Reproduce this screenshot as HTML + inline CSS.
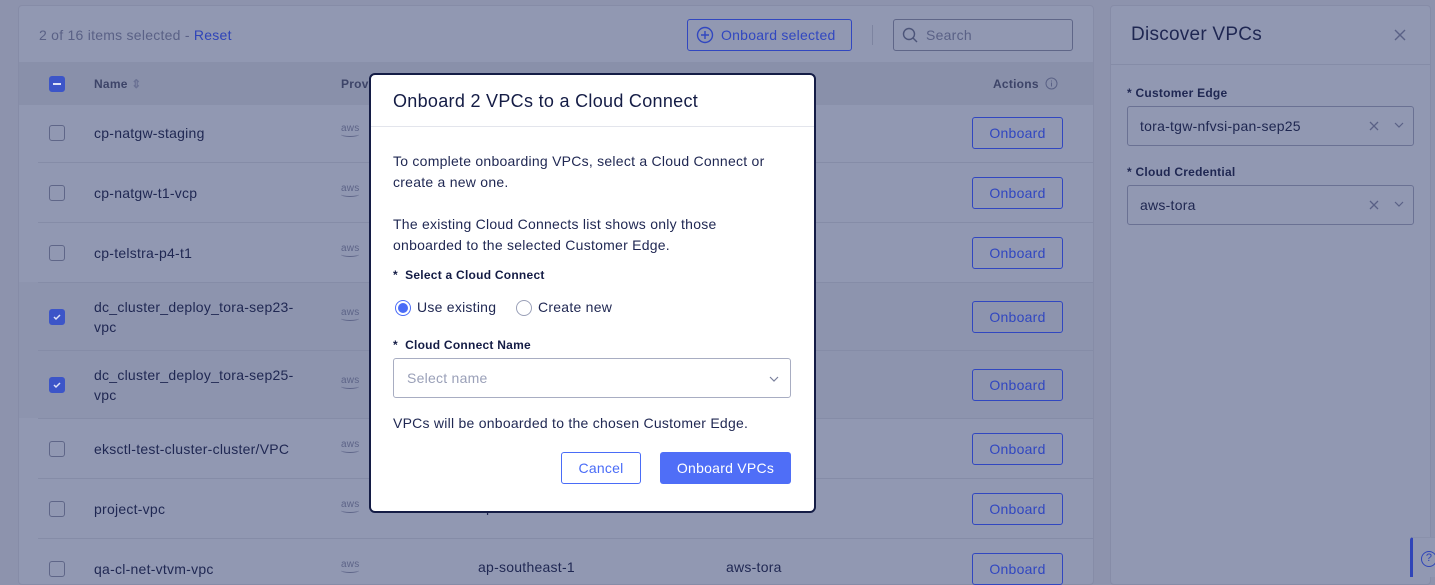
<!DOCTYPE html>
<html><head><style>
*{box-sizing:border-box;margin:0;padding:0}
body{width:1435px;height:574px;overflow:hidden;background:#8d93ad;font-family:"Liberation Sans",sans-serif;position:relative;color:#1e2650;letter-spacing:0.25px}
.panel{position:absolute;background:#9198b2;border:1px solid #868ca7;border-radius:4px}
.abs{position:absolute}
.cb{position:absolute;left:49px;width:16px;height:16px;border:1px solid #5f6688;border-radius:3px}
.cb.on{background:#3c55c8;border-color:#3c55c8}
.name{position:absolute;left:94px;font-size:14px;color:#1f2752;line-height:20px}
.aws{position:absolute;left:341px;font-size:10px;color:#5d6488;line-height:10px}
.aws:after{content:"";display:block;width:18px;height:4px;border-bottom:1px solid #5d6488;border-radius:0 0 50% 50%;margin-top:-2px}
.ob{position:absolute;left:972px;width:91px;height:32px;border:1px solid #3147c0;border-radius:3px;color:#3147c0;font-size:14px;text-align:center;line-height:30px}
.line{position:absolute;left:38px;width:1055px;height:1px;background:#858ca7}
.txt{position:absolute;font-size:14px;color:#1f2752}
.chev{position:absolute;top:14px}
</style></head><body>
<div class="panel" style="left:18px;top:5px;width:1076px;height:580px"></div>
<div class="abs" style="left:19px;top:62px;width:1074px;height:43px;background:#8990aa"></div>
<div class="abs" style="left:19px;top:282px;width:1074px;height:136px;background:#8d94ae"></div>
<div class="txt" style="left:39px;top:27px;color:#5a6186">2 of 16 items selected - <span style="color:#2f44b8">Reset</span></div>
<div class="abs" style="left:687px;top:19px;width:165px;height:32px;border:1px solid #3147c0;border-radius:3px;color:#3147c0;font-size:14px;line-height:30px;padding-left:33px">Onboard selected</div>
<svg class="abs" style="left:696px;top:26px" width="18" height="18" viewBox="0 0 18 18"><circle cx="9" cy="9" r="7.5" fill="none" stroke="#3147c0" stroke-width="1.4"/><path d="M9 5v8M5 9h8" stroke="#3147c0" stroke-width="1.4"/></svg>
<div class="abs" style="left:872px;top:25px;width:1px;height:20px;background:#7d84a0"></div>
<div class="abs" style="left:893px;top:19px;width:180px;height:32px;border:1px solid #5f6688;border-radius:3px;color:#5a6186;font-size:14px;line-height:30px;padding-left:32px">Search</div>
<svg class="abs" style="left:902px;top:27px" width="16" height="16"><circle cx="7" cy="7" r="5.5" fill="none" stroke="#4c5479" stroke-width="1.4"/><path d="M11 11l4 4" stroke="#4c5479" stroke-width="1.4"/></svg>
<div class="cb on" style="top:76px"><div style="width:8px;height:2px;background:#dfe3f7;margin:6px 3px"></div></div>
<div class="abs" style="left:94px;top:77px;font-size:12px;font-weight:bold;color:#3d4468">Name <span style="color:#6b7294">⇕</span></div>
<div class="abs" style="left:341px;top:77px;font-size:12px;font-weight:bold;color:#3d4468">Prov</div>
<div class="abs" style="left:993px;top:77px;font-size:12px;font-weight:bold;color:#3d4468">Actions</div>
<svg class="abs" style="left:1045px;top:77px" width="13" height="13"><circle cx="6.5" cy="6.5" r="5.5" fill="none" stroke="#5a6186"/><path d="M6.5 5.5v4M6.5 3.5v1" stroke="#5a6186"/></svg>

<div class="line" style="top:162px;left:38px"></div><div class="line" style="top:222px"></div><div class="line" style="top:282px"></div><div class="line" style="top:350px"></div><div class="line" style="top:418px"></div><div class="line" style="top:478px"></div><div class="line" style="top:538px"></div>

<div class="cb" style="top:125px"></div><div class="name" style="top:123px">cp-natgw-staging</div><div class="aws" style="top:124px">aws</div><div class="ob" style="top:117px">Onboard</div>
<div class="cb" style="top:185px"></div><div class="name" style="top:183px">cp-natgw-t1-vcp</div><div class="aws" style="top:184px">aws</div><div class="ob" style="top:177px">Onboard</div>
<div class="cb" style="top:245px"></div><div class="name" style="top:243px">cp-telstra-p4-t1</div><div class="aws" style="top:244px">aws</div><div class="ob" style="top:237px">Onboard</div>
<div class="cb on" style="top:309px"><svg width="14" height="14"><path d="M4 7l2 2 4-4" stroke="#dfe3f7" stroke-width="1.5" fill="none"/></svg></div><div class="name" style="top:297px">dc_cluster_deploy_tora-sep23-<br>vpc</div><div class="aws" style="top:308px">aws</div><div class="ob" style="top:301px">Onboard</div>
<div class="cb on" style="top:377px"><svg width="14" height="14"><path d="M4 7l2 2 4-4" stroke="#dfe3f7" stroke-width="1.5" fill="none"/></svg></div><div class="name" style="top:365px">dc_cluster_deploy_tora-sep25-<br>vpc</div><div class="aws" style="top:376px">aws</div><div class="ob" style="top:369px">Onboard</div>
<div class="cb" style="top:441px"></div><div class="name" style="top:439px">eksctl-test-cluster-cluster/VPC</div><div class="aws" style="top:440px">aws</div><div class="ob" style="top:433px">Onboard</div>
<div class="cb" style="top:501px"></div><div class="name" style="top:499px">project-vpc</div><div class="aws" style="top:500px">aws</div><div class="txt" style="left:478px;top:499px">ap-southeast-1</div><div class="txt" style="left:726px;top:499px">aws-tora</div><div class="ob" style="top:493px">Onboard</div>
<div class="cb" style="top:561px"></div><div class="name" style="top:559px">qa-cl-net-vtvm-vpc</div><div class="aws" style="top:560px">aws</div><div class="txt" style="left:478px;top:559px">ap-southeast-1</div><div class="txt" style="left:726px;top:559px">aws-tora</div><div class="ob" style="top:553px">Onboard</div>

<!-- right panel -->
<div class="panel" style="left:1110px;top:5px;width:321px;height:580px"></div>
<div class="abs" style="left:1111px;top:64px;width:319px;height:1px;background:#858ca7"></div>
<div class="abs" style="left:1131px;top:24px;font-size:19px;color:#1f2752">Discover VPCs</div>
<svg class="abs" style="left:1394px;top:29px" width="12" height="12"><path d="M1 1l10 10M11 1L1 11" stroke="#5a6186" stroke-width="1.4"/></svg>
<div class="abs" style="left:1127px;top:86px;font-size:12px;font-weight:bold;color:#1f2752">* Customer Edge</div>
<div class="abs" style="left:1127px;top:106px;width:287px;height:40px;border:1px solid #6a7193;border-radius:3px;font-size:14px;line-height:38px;padding-left:12px">tora-tgw-nfvsi-pan-sep25<svg class="abs" style="left:241px;top:14px" width="10" height="10"><path d="M1 1l8 8M9 1L1 9" stroke="#5a6186" stroke-width="1.3"/></svg><svg class="chev" style="left:265px" width="12" height="8"><path d="M2 2l4 4 4-4" stroke="#5a6186" fill="none" stroke-width="1.2"/></svg></div>
<div class="abs" style="left:1127px;top:165px;font-size:12px;font-weight:bold;color:#1f2752">* Cloud Credential</div>
<div class="abs" style="left:1127px;top:185px;width:287px;height:40px;border:1px solid #6a7193;border-radius:3px;font-size:14px;line-height:38px;padding-left:12px">aws-tora<svg class="abs" style="left:241px;top:14px" width="10" height="10"><path d="M1 1l8 8M9 1L1 9" stroke="#5a6186" stroke-width="1.3"/></svg><svg class="chev" style="left:265px" width="12" height="8"><path d="M2 2l4 4 4-4" stroke="#5a6186" fill="none" stroke-width="1.2"/></svg></div>
<div class="abs" style="left:1410px;top:537px;width:30px;height:40px;border-left:3px solid #2f44b8;border-top:1px solid #8a91ab;background:#9198b2;border-radius:3px 0 0 0"></div>
<div class="abs" style="left:1421px;top:551px;width:16px;height:16px;border:1.5px solid #2f44b8;border-radius:50%;font-size:11px;color:#2f44b8;text-align:center;line-height:13px">?</div>

<!-- modal -->
<div class="abs" style="left:369px;top:73px;width:447px;height:440px;background:#fff;border:2px solid #141c45;border-radius:6px">
<div style="height:52px;border-bottom:1px solid #e3e5ec;padding:16px 0 0 22px;font-size:18px;color:#141c45;letter-spacing:0.3px">Onboard 2 VPCs to a Cloud Connect</div>
<div class="txt" style="left:22px;top:76px;line-height:21px">To complete onboarding VPCs, select a Cloud Connect or<br>create a new one.</div>
<div class="txt" style="left:22px;top:139px;line-height:21px">The existing Cloud Connects list shows only those<br>onboarded to the selected Customer Edge.</div>
<div class="abs" style="left:22px;top:193px;font-size:12px;font-weight:bold;color:#141c45">*&nbsp; Select a Cloud Connect</div>
<div class="abs" style="left:24px;top:225px;width:16px;height:16px;border:1px solid #4a6cf7;border-radius:50%"><div style="width:10px;height:10px;background:#4a6cf7;border-radius:50%;margin:2px"></div></div>
<div class="txt" style="left:46px;top:224px">Use existing</div>
<div class="abs" style="left:145px;top:225px;width:16px;height:16px;border:1px solid #9aa0b8;border-radius:50%"></div>
<div class="txt" style="left:167px;top:224px">Create new</div>
<div class="abs" style="left:22px;top:263px;font-size:12px;font-weight:bold;color:#141c45">*&nbsp; Cloud Connect Name</div>
<div class="abs" style="left:22px;top:283px;width:398px;height:40px;border:1px solid #a8adc2;border-radius:3px;font-size:14px;color:#9aa0b8;line-height:38px;padding-left:13px">Select name<svg class="chev" style="left:374px;top:16px" width="12" height="8"><path d="M2 2l4 4 4-4" stroke="#7a809c" fill="none" stroke-width="1.2"/></svg></div>
<div class="txt" style="left:22px;top:340px">VPCs will be onboarded to the chosen Customer Edge.</div>
<div class="abs" style="left:190px;top:377px;width:80px;height:32px;border:1px solid #4a6cf7;border-radius:3px;color:#4a6cf7;font-size:14px;text-align:center;line-height:30px">Cancel</div>
<div class="abs" style="left:289px;top:377px;width:131px;height:32px;background:#4f6ef7;border-radius:3px;color:#fff;font-size:14px;text-align:center;line-height:32px">Onboard VPCs</div>
</div>
</body></html>
